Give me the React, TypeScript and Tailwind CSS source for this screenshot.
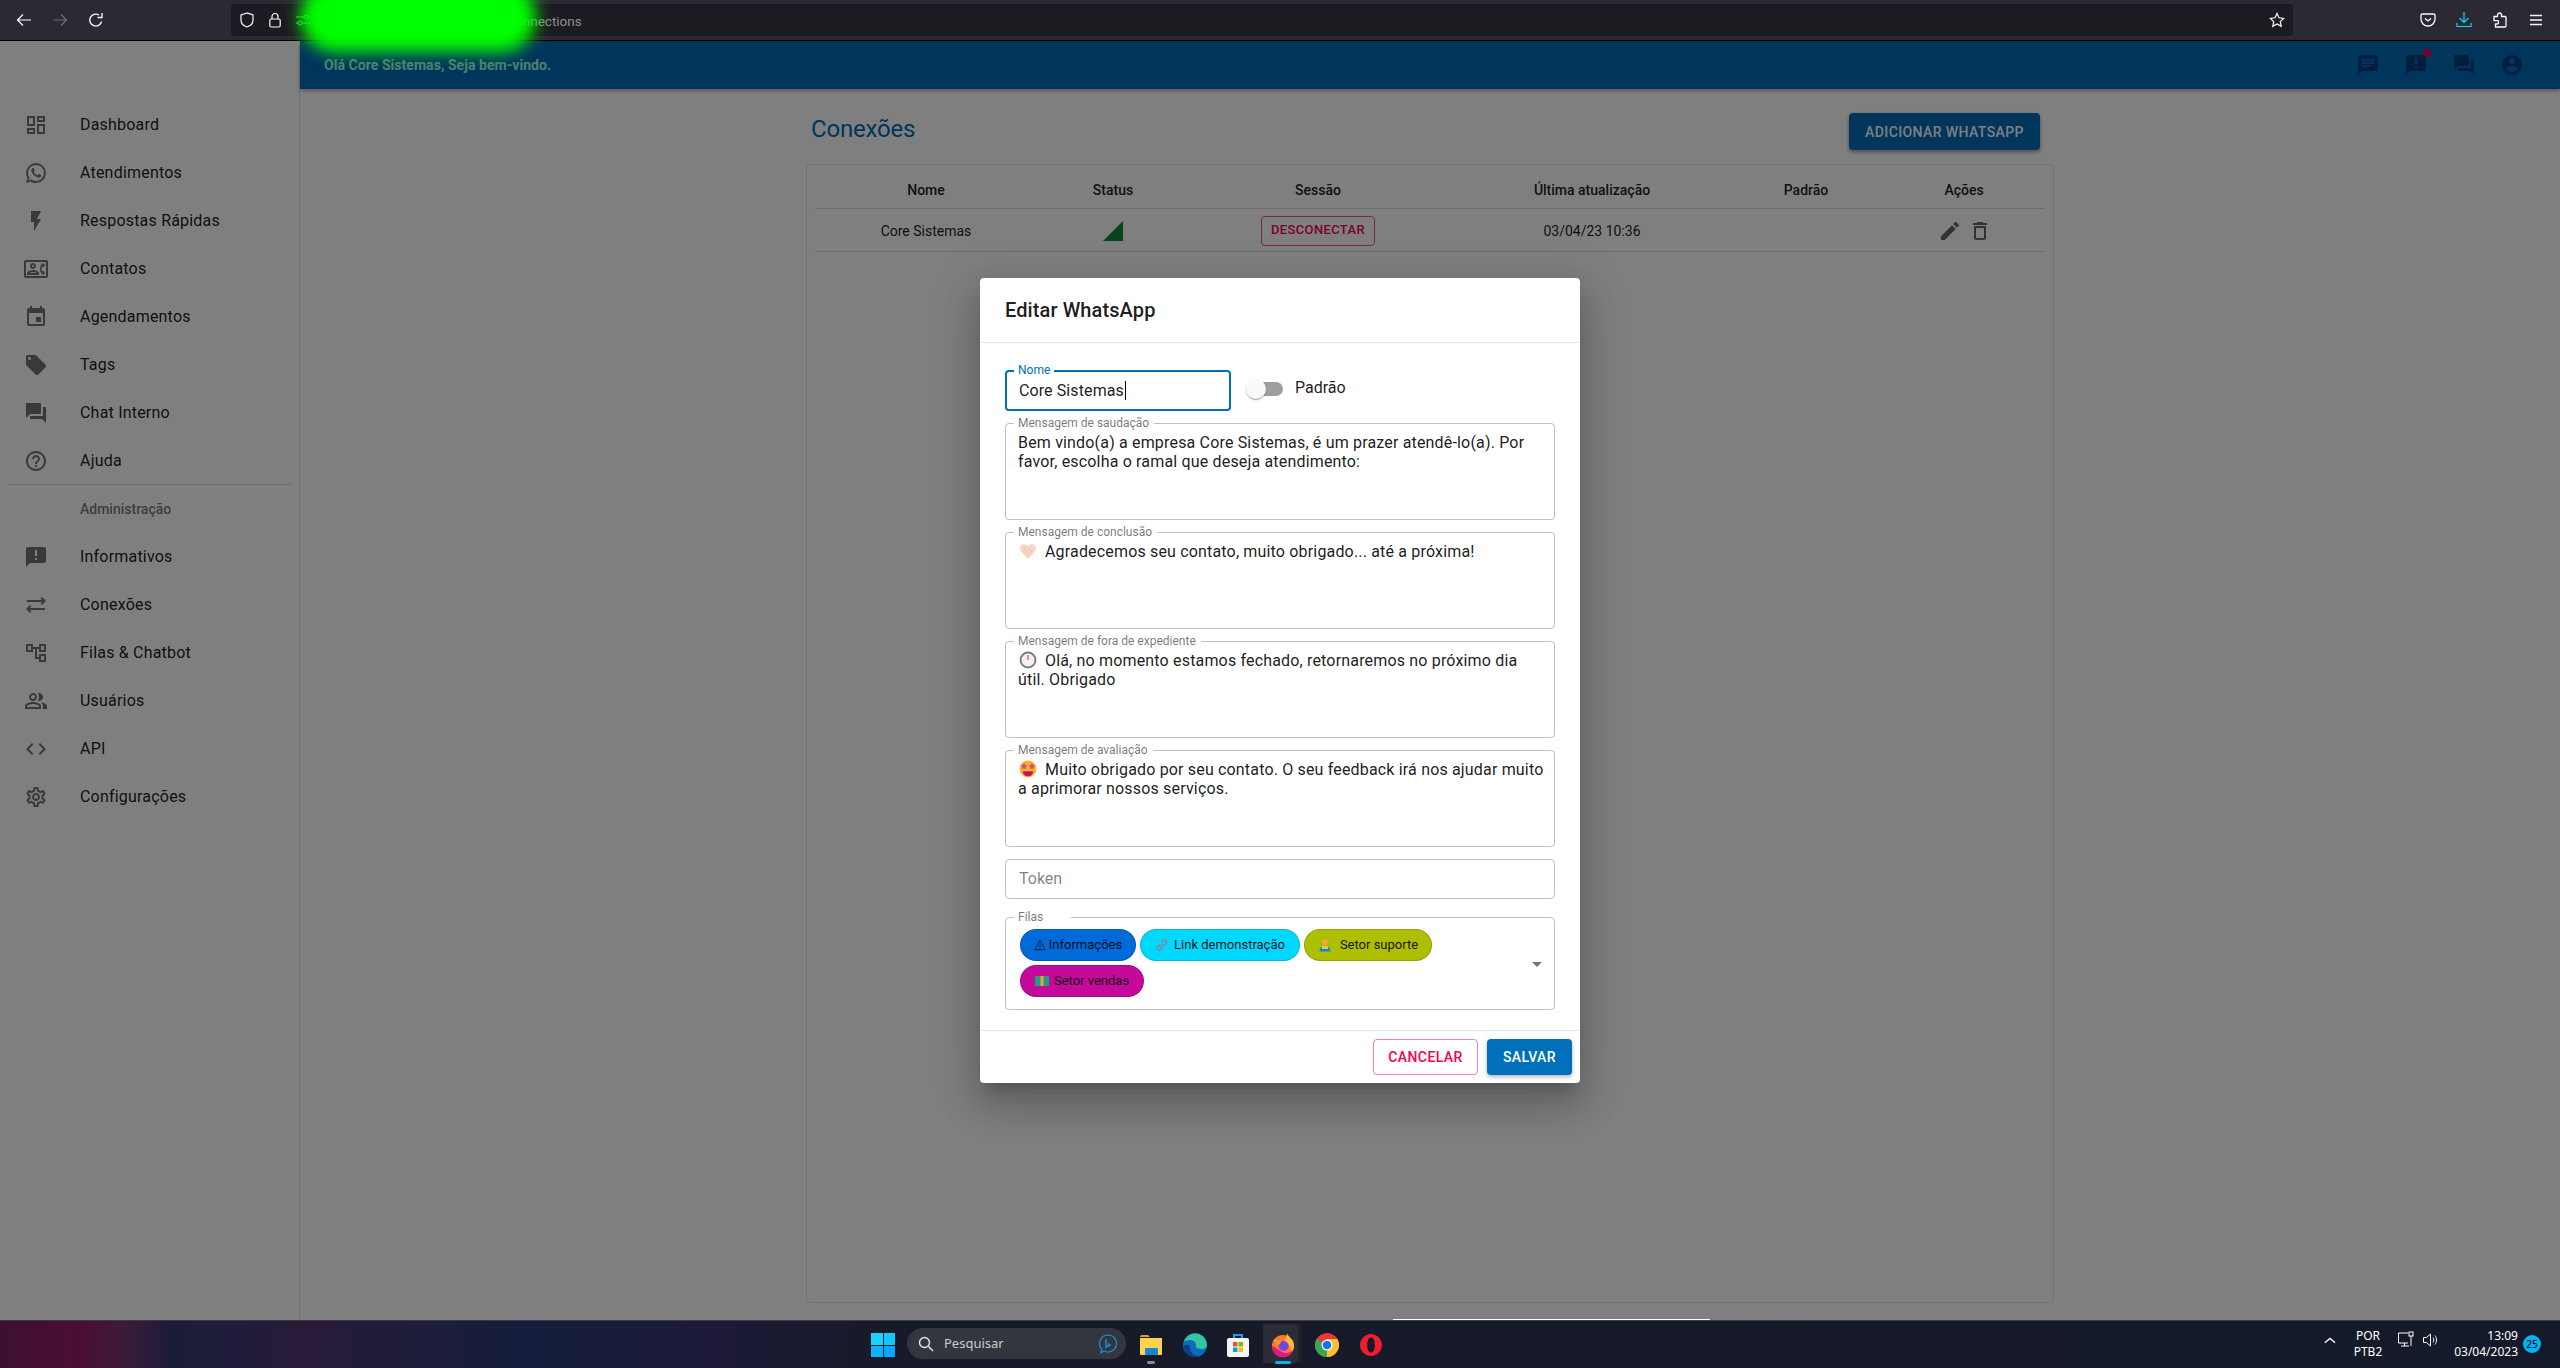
import React from "react";

const ICONS = {
  dashboard: "M19 5v2h-4V5h4M9 5v6H5V5h4m10 8v6h-4v-6h4M9 17v2H5v-2h4M21 3h-8v6h8V3zM11 3H3v10h8V3zm10 8h-8v10h8V11zm-10 4H3v6h8v-6z",
  whatsapp: "M16.75 13.96c.25.13.41.2.46.3.06.11.04.61-.21 1.18-.2.56-1.24 1.1-1.7 1.12-.46.02-.47.36-2.96-.73-2.49-1.09-3.99-3.75-4.11-3.92-.12-.17-.96-1.38-.92-2.61.05-1.22.69-1.8.95-2.04.24-.26.51-.29.68-.26h.47c.15 0 .36-.06.55.45l.69 1.87c.06.13.1.28.01.44l-.27.41-.39.42c-.12.12-.26.25-.12.5.12.26.62 1.09 1.32 1.78.91.88 1.71 1.17 1.95 1.3.24.14.39.12.54-.04l.81-.94c.19-.25.35-.19.58-.11l1.67.88M12 2a10 10 0 0 1 10 10 10 10 0 0 1-10 10c-1.97 0-3.8-.57-5.35-1.55L2 22l1.55-4.65A9.969 9.969 0 0 1 2 12 10 10 0 0 1 12 2m0 2a8 8 0 0 0-8 8c0 1.72.54 3.31 1.46 4.61L4.5 19.5l2.89-.96A7.95 7.95 0 0 0 12 20a8 8 0 0 0 8-8 8 8 0 0 0-8-8z",
  flash: "M7 2v11h3v9l7-12h-4l4-8z",
  contact: "M22 3H2C.9 3 0 3.9 0 5v14c0 1.1.9 2 2 2h20c1.1 0 1.99-.9 1.99-2L24 5c0-1.1-.9-2-2-2zm0 16H2V5h20v14zm-2.99-1.01L21 16l-1.51-2h-1.64c-.22-.63-.35-1.3-.35-2s.13-1.37.35-2h1.64L21 8l-1.99-1.99c-1.31.98-2.28 2.37-2.73 3.99-.18.64-.28 1.31-.28 2s.1 1.36.28 2c.45 1.61 1.42 3.01 2.73 3.99zM9 12c1.65 0 3-1.35 3-3s-1.35-3-3-3-3 1.35-3 3 1.35 3 3 3zm0-4c.55 0 1 .45 1 1s-.45 1-1 1-1-.45-1-1 .45-1 1-1zm6 8.59c0-2.5-3.97-3.58-6-3.58s-6 1.08-6 3.58V18h12v-1.41zM5.48 16c.74-.5 2.22-1 3.52-1s2.77.49 3.52 1H5.48z",
  event: "M17 12h-5v5h5v-5zM16 1v2H8V1H6v2H5c-1.11 0-1.99.9-1.99 2L3 19c0 1.1.89 2 2 2h14c1.1 0 2-.9 2-2V5c0-1.1-.9-2-2-2h-1V1h-2zm3 18H5V8h14v11z",
  tag: "M21.41 11.58l-9-9C12.05 2.22 11.55 2 11 2H4c-1.1 0-2 .9-2 2v7c0 .55.22 1.05.59 1.42l9 9c.36.36.86.58 1.41.58.55 0 1.05-.22 1.41-.59l7-7c.37-.36.59-.86.59-1.41 0-.55-.23-1.06-.59-1.42zM5.5 7C4.67 7 4 6.33 4 5.5S4.67 4 5.5 4 7 4.67 7 5.5 6.33 7 5.5 7z",
  forum: "M21 6h-2v9H6v2c0 .55.45 1 1 1h11l4 4V7c0-.55-.45-1-1-1zm-4 6V3c0-.55-.45-1-1-1H3c-.55 0-1 .45-1 1v14l4-4h10c.55 0 1-.45 1-1z",
  help: "M11 18h2v-2h-2v2zm1-16C6.48 2 2 6.48 2 12s4.48 10 10 10 10-4.48 10-10S17.52 2 12 2zm0 18c-4.41 0-8-3.59-8-8s3.59-8 8-8 8 3.59 8 8-3.59 8-8 8zm0-14c-2.21 0-4 1.79-4 4h2c0-1.1.9-2 2-2s2 .9 2 2c0 2-3 1.75-3 5h2c0-2.25 3-2.5 3-5 0-2.21-1.79-4-4-4z",
  announcement: "M20 2H4c-1.1 0-1.99.9-1.99 2L2 22l4-4h14c1.1 0 2-.9 2-2V4c0-1.1-.9-2-2-2zm-7 9h-2V5h2v6zm0 4h-2v-2h2v2z",
  sync: "M7.41 13.41L6 12l-4 4 4 4 1.41-1.41L5.83 17H21v-2H5.83zm9.18-2.82L18 12l4-4-4-4-1.41 1.41L18.17 7H3v2h15.17z",
  tree: "M22 11V3h-7v3H9V3H2v8h7V8h2v10h4v3h7v-8h-7v3h-2V8h2v3h7zM7 9H4V5h3v4zm10 6h3v4h-3v-4zm0-10h3v4h-3V5z",
  people: "M16.67 13.13C18.04 14.06 19 15.32 19 17v3h4v-3c0-2.18-3.57-3.47-6.33-3.87zM15 12c2.21 0 4-1.79 4-4s-1.79-4-4-4c-.47 0-.91.1-1.33.24C14.5 5.27 15 6.58 15 8s-.5 2.73-1.33 3.76c.42.14.86.24 1.33.24zM9 12c2.21 0 4-1.79 4-4s-1.79-4-4-4-4 1.79-4 4 1.79 4 4 4zm0-6c1.1 0 2 .9 2 2s-.9 2-2 2-2-.9-2-2 .9-2 2-2zM9 13c-2.67 0-8 1.34-8 4v3h16v-3c0-2.66-5.33-4-8-4zm6 5H3v-.99C3.2 16.29 6.3 15 9 15s5.8 1.29 6 2v1z",
  code: "M9.4 16.6L4.8 12l4.6-4.6L8 6l-6 6 6 6 1.4-1.4zm5.2 0l4.6-4.6-4.6-4.6L16 6l6 6-6 6-1.4-1.4z",
  settings: "M19.43 12.98c.04-.32.07-.64.07-.98 0-.34-.03-.66-.07-.98l2.11-1.65c.19-.15.24-.42.12-.64l-2-3.46c-.09-.16-.26-.25-.44-.25-.06 0-.12.01-.17.03l-2.49 1c-.52-.4-1.08-.73-1.69-.98l-.38-2.65C14.46 2.18 14.25 2 14 2h-4c-.25 0-.46.18-.49.42l-.38 2.65c-.61.25-1.17.59-1.69.98l-2.49-1c-.06-.02-.12-.03-.18-.03-.17 0-.34.09-.43.25l-2 3.46c-.13.22-.07.49.12.64l2.11 1.65c-.04.32-.07.65-.07.98 0 .33.03.66.07.98l-2.11 1.65c-.19.15-.24.42-.12.64l2 3.46c.09.16.26.25.44.25.06 0 .12-.01.17-.03l2.49-1c.52.4 1.08.73 1.69.98l.38 2.65c.03.24.24.42.49.42h4c.25 0 .46-.18.49-.42l.38-2.65c.61-.25 1.17-.59 1.69-.98l2.49 1c.06.02.12.03.18.03.17 0 .34-.09.43-.25l2-3.46c.12-.22.07-.49-.12-.64l-2.11-1.65zm-1.98-1.71c.04.31.05.52.05.73 0 .21-.02.43-.05.73l-.14 1.13.89.7 1.08.84-.7 1.21-1.27-.51-1.04-.42-.9.68c-.43.32-.84.56-1.25.73l-1.06.43-.16 1.13-.2 1.35h-1.4l-.19-1.35-.16-1.13-1.06-.43c-.43-.18-.83-.41-1.23-.71l-.91-.7-1.06.43-1.27.51-.7-1.21 1.08-.84.89-.7-.14-1.13c-.03-.31-.05-.54-.05-.74s.02-.43.05-.73l.14-1.13-.89-.7-1.08-.84.7-1.21 1.27.51 1.04.42.9-.68c.43-.32.84-.56 1.25-.73l1.06-.43.16-1.13.2-1.35h1.39l.19 1.35.16 1.13 1.06.43c.43.18.83.41 1.23.71l.91.7 1.06-.43 1.27-.51.7 1.21-1.07.85-.89.7.14 1.13zM12 8c-2.21 0-4 1.79-4 4s1.79 4 4 4 4-1.79 4-4-1.79-4-4-4zm0 6c-1.1 0-2-.9-2-2s.9-2 2-2 2 .9 2 2-.9 2-2 2z",
  chat: "M20 2H4c-1.1 0-1.99.9-1.99 2L2 22l4-4h14c1.1 0 2-.9 2-2V4c0-1.1-.9-2-2-2zM6 9h12v2H6V9zm8 5H6v-2h8v2zm4-6H6V6h12v2z",
  account: "M12 2C6.48 2 2 6.48 2 12s4.48 10 10 10 10-4.48 10-10S17.52 2 12 2zm0 3c1.66 0 3 1.34 3 3s-1.34 3-3 3-3-1.34-3-3 1.34-3 3-3zm0 14.2c-2.5 0-4.71-1.28-6-3.22.03-1.99 4-3.08 6-3.08 1.99 0 5.97 1.09 6 3.08-1.29 1.94-3.5 3.22-6 3.22z",
  edit: "M3 17.25V21h3.75L17.81 9.94l-3.75-3.75L3 17.25zM20.71 7.04c.39-.39.39-1.02 0-1.41l-2.34-2.34c-.39-.39-1.02-.39-1.41 0l-1.83 1.83 3.75 3.75 1.83-1.83z",
  trash: "M6 19c0 1.1.9 2 2 2h8c1.1 0 2-.9 2-2V7H6v12zM8 9h8v10H8V9zm7.5-5l-1-1h-5l-1 1H5v2h14V4z",
  signal: "M2 22h20V2z",
  dropdown: "M7 10l5 5 5-5z",
};

function Mi({ name, className }: { name: keyof typeof ICONS; className?: string }) {
  return (
    <svg viewBox="0 0 24 24" className={className} fill="currentColor">
      <path d={ICONS[name]} />
    </svg>
  );
}

const menuTop: [keyof typeof ICONS, string][] = [
  ["dashboard", "Dashboard"],
  ["whatsapp", "Atendimentos"],
  ["flash", "Respostas Rápidas"],
  ["contact", "Contatos"],
  ["event", "Agendamentos"],
  ["tag", "Tags"],
  ["forum", "Chat Interno"],
  ["help", "Ajuda"],
];

const menuAdmin: [keyof typeof ICONS, string][] = [
  ["announcement", "Informativos"],
  ["sync", "Conexões"],
  ["tree", "Filas & Chatbot"],
  ["people", "Usuários"],
  ["code", "API"],
  ["settings", "Configurações"],
];

function MenuItem({ icon, label }: { icon: keyof typeof ICONS; label: string }) {
  return (
    <div className="flex h-12 items-center pl-6">
      <div className="w-14">
        <Mi name={icon} className="h-6 w-6 text-black/55" />
      </div>
      <span className="text-base tracking-[0.2px] text-black/90">{label}</span>
    </div>
  );
}

function FirefoxBar() {
  return (
    <div className="flex h-10 items-center bg-[#2b2a33] text-[#fbfbfe]">
      <div className="flex w-[231px] items-center">
        <svg viewBox="0 0 16 16" className="ml-4 h-4 w-4" fill="none" stroke="currentColor" strokeWidth="1.2">
          <path d="M15 8H1.5M7 2.5 1.5 8 7 13.5" />
        </svg>
        <svg viewBox="0 0 16 16" className="ml-5 h-4 w-4 text-[#6f6e76]" fill="none" stroke="currentColor" strokeWidth="1.2">
          <path d="M1 8h13.5M9 2.5 14.5 8 9 13.5" />
        </svg>
        <svg viewBox="0 0 16 16" className="ml-5 h-4 w-4" fill="none" stroke="currentColor" strokeWidth="1.3">
          <path d="M13.6 9.5A6 6 0 1 1 11 3" />
          <path d="M14 1v4.5H9.5" />
        </svg>
      </div>
      <div className="flex h-8 w-[2062px] items-center rounded bg-[#1c1b22]">
        <svg viewBox="0 0 16 16" className="ml-2 h-4 w-4" fill="none" stroke="currentColor" strokeWidth="1.2">
          <path d="M8 1 2 3v5c0 3.5 2.8 6 6 7 3.2-1 6-3.5 6-7V3z" />
        </svg>
        <svg viewBox="0 0 16 16" className="ml-3 h-4 w-4" fill="none" stroke="currentColor" strokeWidth="1.2">
          <rect x="2.8" y="7" width="10.4" height="8" rx="1.5" />
          <path d="M5 7V4.5a3 3 0 0 1 6 0V7" />
        </svg>
        <svg viewBox="0 0 16 16" className="ml-3 h-4 w-4 text-[#20e040]" fill="none" stroke="currentColor" strokeWidth="1">
          <path d="M1 5h8M13 5h2M1 11h2M7 11h8" />
          <circle cx="11" cy="5" r="2" />
          <circle cx="5" cy="11" r="2" />
        </svg>
        <span className="ml-[197px] mt-[2px] text-[13.5px] text-[#8f8f94]">connections</span>
        <svg viewBox="0 0 16 16" className="ml-auto mr-2 h-4 w-4" fill="none" stroke="currentColor" strokeWidth="1.2">
          <path d="m8 1.5 2 4.3 4.7.6-3.4 3.2.9 4.7L8 12l-4.2 2.3.9-4.7L1.3 6.4 6 5.8z" />
        </svg>
      </div>
      <div className="ml-auto flex w-[267px] items-center justify-end gap-5 pr-[16px]">
        <svg viewBox="0 0 16 16" className="h-4 w-4" fill="none" stroke="currentColor" strokeWidth="1.3">
          <path d="M2.5 2h11A1.5 1.5 0 0 1 15 3.5V7A7 7 0 0 1 1 7V3.5A1.5 1.5 0 0 1 2.5 2z" />
          <path d="m5 6.5 3 2.5 3-2.5" />
        </svg>
        <svg viewBox="0 0 16 16" className="h-4 w-4 text-[#00ddff]" fill="none" stroke="currentColor" strokeWidth="1.2">
          <path d="M8 0v10M3.5 6 8 10.5 12.5 6M1 11v3.5h14V11" />
        </svg>
        <svg viewBox="0 0 16 16" className="h-4 w-4" fill="none" stroke="currentColor" strokeWidth="1.3">
          <path d="M2 4.5h3.5V3a2 2 0 0 1 4 0v1.5H13a1 1 0 0 1 1 1V14a1 1 0 0 1-1 1H3.5v-3H5a1.7 1.7 0 0 0 0-3.4H2z" />
        </svg>
        <svg viewBox="0 0 16 16" className="h-4 w-4" fill="none" stroke="currentColor" strokeWidth="1.3">
          <path d="M2 3.5h12M2 8h12M2 12.5h12" />
        </svg>
      </div>
    </div>
  );
}

function TopHeader() {
  return (
    <div className="flex h-12 items-center bg-[#006ab8] pl-6 pr-9 shadow-[0_2px_4px_rgba(0,0,0,0.3)]">
      <span className="text-sm font-bold tracking-[0.05px] text-[#a0ffe4]">Olá Core Sistemas, Seja bem-vindo.</span>
      <div className="relative ml-auto flex gap-6 text-[#003e7c]">
        <Mi name="chat" className="h-6 w-6" />
        <div className="relative">
          <Mi name="announcement" className="h-6 w-6" />
          <span className="absolute -right-[3px] -top-1 h-2 w-2 rounded-full bg-[#f50057]" />
        </div>
        <Mi name="forum" className="h-6 w-6" />
        <Mi name="account" className="h-6 w-6" />
      </div>
    </div>
  );
}

function ConnectionsPage() {
  return (
    <div className="mx-auto flex min-h-0 w-[1280px] flex-1 flex-col px-4 pb-[17px] pt-6">
      <div className="flex h-[37px] items-center justify-between pl-[5px] pr-[14px]">
        <h2 className="-mt-[6px] text-[24px] leading-none tracking-[-0.2px] text-[#006ab8]">Conexões</h2>
        <button className="flex h-[37px] w-[191px] items-center justify-center rounded bg-[#006ab8] text-sm font-medium tracking-[0.4px] text-white shadow-[0_2px_4px_rgba(0,0,0,0.4)]">
          ADICIONAR WHATSAPP
        </button>
      </div>
      <div className="mt-[14px] flex-1 rounded border border-black/10 p-2">
        <div className="grid h-9 grid-cols-[222px_142px_278px_270px_158px_160px] items-center border-b border-black/15 pb-[2px] text-center text-sm font-medium text-black/90">
          <span>Nome</span>
          <span className="pl-[10px]">Status</span>
          <span>Sessão</span>
          <span>Última atualização</span>
          <span>Padrão</span>
          <span className="pr-[2px]">Ações</span>
        </div>
        <div className="grid h-[43px] grid-cols-[222px_142px_278px_270px_158px_160px] items-center border-b border-black/15 pt-[1px] text-center text-sm text-black/90">
          <span>Core Sistemas</span>
          <span className="flex justify-center pl-[10px]">
            <Mi name="signal" className="h-6 w-6 text-[#0f8a3a]" />
          </span>
          <span className="flex justify-center">
            <span className="flex h-[30px] w-[114px] items-center justify-center rounded border border-[#f50057]/70 text-[13px] font-medium tracking-[0.37px] text-[#f50057]">
              DESCONECTAR
            </span>
          </span>
          <span>03/04/23 10:36</span>
          <span />
          <span className="flex justify-center gap-1.5 pr-px text-black/60">
            <Mi name="edit" className="h-6 w-6" />
            <Mi name="trash" className="h-6 w-6" />
          </span>
        </div>
      </div>
    </div>
  );
}

function Emoji({ kind }: { kind: "heart" | "clock" | "star" | "warn" | "link" | "person" | "money" }) {
  if (kind === "heart")
    return (
      <svg viewBox="0 0 16 16" className="ml-px mr-[8px] inline-block h-[18px] w-[18px] align-[-3px]">
        <path d="M8 15 1.5 8C-.5 5 2 1.500 5 2c1.400.2 2.400 1 3 2 .6-1 1.600-1.800 3-2 3-.5 5.500 3 3.500 6z" fill="#f8d5c4" />
        <path d="M4 5 10 11M7 4l5 5M3 8l4 4" stroke="#f2b59c" strokeWidth="0.7" />
      </svg>
    );
  if (kind === "clock")
    return (
      <svg viewBox="0 0 16 16" className="ml-px mr-[8px] inline-block h-[18px] w-[18px] align-[-3px]">
        <circle cx="8" cy="8" r="7.500" fill="#7d7d7d" />
        <circle cx="8" cy="8" r="5.800" fill="#f1f1f1" />
        <path d="M8 8V3.500" stroke="#d0486a" strokeWidth="1" />
      </svg>
    );
  if (kind === "star")
    return (
      <svg viewBox="0 0 16 16" className="ml-px mr-[8px] inline-block h-[18px] w-[18px] align-[-3px]">
        <circle cx="8" cy="8" r="7.500" fill="#f7b32b" />
        <path d="m4.500 2.500 1 2 2 .3-1.500 1.500.4 2-1.900-1-1.900 1 .4-2L1.500 4.800l2-.3zM11.500 2.500l1 2 2 .3-1.500 1.500.4 2-1.900-1-1.900 1 .4-2-1.500-1.500 2-.3z" fill="#ec3f8f" />
        <path d="M3.500 10h9c0 3-2 4.500-4.500 4.500S3.500 13 3.500 10z" fill="#c2185b" />
      </svg>
    );
  if (kind === "warn")
    return (
      <svg viewBox="0 0 14 14" className="mr-[3px] h-3 w-3 shrink-0" fill="none" stroke="#111" strokeWidth="1">
        <path d="M7 1.500 13 12.500H1z" />
        <path d="M7 5.500v4M7 10.500v1" />
      </svg>
    );
  if (kind === "link")
    return (
      <svg viewBox="0 0 14 14" className="mr-[5px] h-[14px] w-[14px] shrink-0" fill="none" stroke="#6f94a8" strokeWidth="2">
        <path d="M6 8.500 8.500 6M5 6.500 2.800 8.700a2 2 0 0 0 2.800 2.800L7.500 9.500M9 7.500l2.200-2.200a2 2 0 0 0-2.800-2.800L6.500 4.500" />
      </svg>
    );
  if (kind === "person")
    return (
      <svg viewBox="0 0 14 14" className="mr-[8px] h-[14px] w-[14px] shrink-0">
        <circle cx="7" cy="4" r="3" fill="#f0a93a" />
        <path d="M1.500 13.500c0-3.500 2-5.500 5.500-5.500s5.500 2 5.500 5.500z" fill="#1e88c9" />
        <path d="M4 8h6v3H4z" fill="#e8c16a" />
      </svg>
    );
  return (
    <svg viewBox="0 0 14 14" className="mr-[5px] h-[14px] w-[14px] shrink-0">
      <rect x="0" y="2" width="14" height="10" rx="1" fill="#1f9d8a" />
      <rect x="5.500" y="2" width="3" height="10" fill="#e8a33a" />
    </svg>
  );
}

function Outlined({ label, labelClass, className, children }: {
  label: string;
  labelClass?: string;
  className?: string;
  children: React.ReactNode;
}) {
  return (
    <div className={`relative rounded border border-black/25 ${className ?? ""}`}>
      <span className={`absolute -top-2 left-2 bg-white pl-[4px] pr-[5px] text-xs leading-[14px] tracking-normal text-black/55 ${labelClass ?? ""}`}>
        {label}
      </span>
      {children}
    </div>
  );
}

function MessageField({ label, children }: { label: string; children: React.ReactNode }) {
  return (
    <Outlined label={label} className="h-[97px] pl-3 pr-2 pt-[9px] text-base leading-[19px] tracking-[0.17px] text-black/90">
      {children}
    </Outlined>
  );
}

function Chip({ bg, width, children }: { bg: string; width: string; children: React.ReactNode }) {
  return (
    <div className={`flex h-8 items-center justify-center rounded-2xl border border-black/15 text-[13px] text-black/90 ${bg} ${width}`}>
      {children}
    </div>
  );
}

function EditDialog() {
  return (
    <div className="w-[600px] rounded bg-white shadow-[0_11px_15px_-7px_rgba(0,0,0,0.2),0_24px_38px_3px_rgba(0,0,0,0.14),0_9px_46px_8px_rgba(0,0,0,0.12)]">
      <div className="flex h-[65px] items-center border-b border-black/10 px-[25px]">
        <h2 className="text-xl font-medium tracking-[0.1px] text-black/90">Editar WhatsApp</h2>
      </div>
      <div className="flex flex-col gap-3 px-[25px] pb-5 pt-[27px]">
        <div className="flex items-start">
          <div className="relative h-[41px] w-[226px] rounded border-2 border-[#0070bb]">
            <span className="absolute -top-[9px] left-[7px] bg-white px-[4px] text-xs leading-[14px] text-[#0070bb]">Nome</span>
            <div className="flex h-full items-center pl-3 text-base tracking-[0.1px] text-black/90">
              Core Sistemas
              <span className="ml-px h-[19px] w-px bg-black" />
            </div>
          </div>
          <div className="relative ml-[25px] mt-3 h-[14px] w-[27px] rounded-full bg-[#9e9e9e]">
            <span className="absolute -left-[10px] -top-[3px] h-5 w-5 rounded-full bg-[#fafafa] shadow-[0_2px_1px_-1px_rgba(0,0,0,0.2),0_1px_1px_0_rgba(0,0,0,0.14),0_1px_3px_0_rgba(0,0,0,0.12)]" />
          </div>
          <span className="ml-3 mt-2 text-base leading-[19px] text-black/90">Padrão</span>
        </div>

        <MessageField label="Mensagem de saudação">
          Bem vindo(a) a empresa Core Sistemas, é um prazer atendê-lo(a). Por favor, escolha o ramal que deseja atendimento:
        </MessageField>
        <MessageField label="Mensagem de conclusão">
          <Emoji kind="heart" />
          Agradecemos seu contato, muito obrigado... até a próxima!
        </MessageField>
        <MessageField label="Mensagem de fora de expediente">
          <Emoji kind="clock" />
          Olá, no momento estamos fechado, retornaremos no próximo dia útil. Obrigado
        </MessageField>
        <MessageField label="Mensagem de avaliação">
          <Emoji kind="star" />
          Muito obrigado por seu contato. O seu feedback irá nos ajudar muito a aprimorar nossos serviços.
        </MessageField>

        <div className="flex h-10 items-center rounded border border-black/25 pl-[13px] text-base text-black/50">Token</div>

        <Outlined label="Filas" labelClass="pr-[28px]" className="mt-[6px] h-[93px]">
          <div className="flex w-[430px] flex-wrap gap-1 pl-[14px] pt-[11px]">
            <Chip bg="bg-[#006ad9]" width="w-[116px]"><Emoji kind="warn" />Informações</Chip>
            <Chip bg="bg-[#00d8ff]" width="w-[160px]"><Emoji kind="link" />Link demonstração</Chip>
            <Chip bg="bg-[#adbf00]" width="w-[128px]"><Emoji kind="person" />Setor suporte</Chip>
            <Chip bg="bg-[#c4099b]" width="w-[124px]"><Emoji kind="money" />Setor vendas</Chip>
          </div>
          <Mi name="dropdown" className="absolute right-[5px] top-[34px] h-6 w-6 text-black/55" />
        </Outlined>
      </div>
      <div className="flex h-[53px] items-center justify-end gap-[9px] border-t border-black/10 pr-2">
        <button className="h-9 w-[105px] rounded border border-[#f50057]/50 text-sm font-medium tracking-[0.4px] text-[#f50057]">CANCELAR</button>
        <button className="h-9 w-[85px] rounded bg-[#0070bb] text-sm font-medium tracking-[0.4px] text-white shadow-[0_2px_4px_rgba(0,0,0,0.3)]">SALVAR</button>
      </div>
    </div>
  );
}

function TaskIcons() {
  return (
    <>
      <svg viewBox="0 0 24 24" className="absolute left-[1139px] top-[12px] h-6 w-6">
        <path d="M1 4a2 2 0 0 1 2-2h6l2 2h-10z" fill="#e8a020" />
        <path d="M1 5h22v16a1 1 0 0 1-1 1H2a1 1 0 0 1-1-1z" fill="#fbd34e" />
        <rect x="6" y="15" width="13" height="7" rx="1" fill="#1a86d0" />
      </svg>
      <span className="absolute left-[1147px] top-[40px] h-[3px] w-2 rounded bg-[#8b8d93]" />
      <svg viewBox="0 0 24 24" className="absolute left-[1183px] top-[12px] h-6 w-6">
        <circle cx="12" cy="12" r="12" fill="#0c6cb8" />
        <path d="M1 9C3 2 10-1 16 1c5 2 8 7 8 11 0 3-3 4-6 4-3 0-6-1-5-4 0-3-3-5-6-5-3 0-5 1-6 2z" fill="#34c6a3" />
        <path d="M7 15c0 4 4 8 9 8l-5 1C6 24 1 20 0 14c2-3 7-3 7 1z" fill="#0a3f86" />
      </svg>
      <svg viewBox="0 0 24 24" className="absolute left-[1226px] top-[12px] h-6 w-6">
        <path d="M8 6V2h8v4" fill="none" stroke="#0ea5e9" strokeWidth="2" />
        <rect x="1" y="5" width="22" height="19" rx="2" fill="#f4f4f4" />
        <rect x="7" y="9" width="4.500" height="4.500" fill="#f25022" />
        <rect x="12.500" y="9" width="4.500" height="4.500" fill="#7fba00" />
        <rect x="7" y="14.500" width="4.500" height="4.500" fill="#00a4ef" />
        <rect x="12.500" y="14.500" width="4.500" height="4.500" fill="#ffb900" />
      </svg>
      <span className="absolute left-[1263px] top-[3px] h-[39px] w-[39px] rounded-r bg-[#1f222b]" />
      <span className="absolute left-[1263px] top-[3px] h-[39px] w-[35px] rounded bg-[#2a2d37]" />
      <svg viewBox="0 0 24 24" className="absolute left-[1271px] top-[12px] h-6 w-6">
        <circle cx="12" cy="13" r="11" fill="#ff7a2b" />
        <path d="M16 0c1 4 7 6 7 13 0 2-1 4-2 6-1-4-3-9-8-11 2-2 3-5 3-8z" fill="#ffbd2e" />
        <path d="M1 13C1 20 6 24 12 24c5 0 9-3 10-7-3 3-7 4-11 2C7 17 4 14 1 13z" fill="#e31587" />
        <circle cx="12.500" cy="13" r="5" fill="#7542e5" />
        <path d="M2 7c3-1 6 0 8 2l-2 3C6 10 4 9 2 7z" fill="#ff9a2e" />
      </svg>
      <span className="absolute left-[1275px] top-[40px] h-[3px] w-4 rounded bg-[#00b4f0]" />
      <svg viewBox="0 0 24 24" className="absolute left-[1315px] top-[12px] h-6 w-6">
        <circle cx="12" cy="12" r="12" fill="#e53935" />
        <path d="M12 12 1.600 6A12 12 0 0 0 12 24z" fill="#34a853" />
        <path d="M12 12 12 24A12 12 0 0 0 22.400 6H12z" fill="#fbc02d" />
        <circle cx="12" cy="12" r="5.500" fill="#fff" />
        <circle cx="12" cy="12" r="4.300" fill="#1a73e8" />
      </svg>
      <svg viewBox="0 0 24 24" className="absolute left-[1359px] top-[12px] h-6 w-6">
        <path fillRule="evenodd" d="M12 1c6 0 11 5 11 11s-5 11-11 11S1 18 1 12 6 1 12 1zm0 3.500c-2.500 0-3.800 3.400-3.800 7.500s1.300 7.500 3.800 7.500 3.800-3.400 3.800-7.500S14.500 4.500 12 4.500z" fill="#f01c2e" />
      </svg>
    </>
  );
}

function Taskbar() {
  return (
    <div className="relative h-12 border-t border-[#3a3b46] bg-[linear-gradient(90deg,#3d1030_0px,#4a0d33_80px,#3e1a3a_120px,#1c1c38_170px,#1e1c3a_240px,#281b38_300px,#141e3c_520px,#1c1a38_720px,#171a28_900px,#151a2a_100%)] font-[family-name:'Noto_Sans',sans-serif] text-white">
      <div className="absolute left-[871px] top-[12px] grid h-6 w-6 grid-cols-2 gap-px">
        <span className="bg-[#19d3ff]" />
        <span className="bg-[#10c8ff]" />
        <span className="bg-[#0ab4ff]" />
        <span className="bg-[#05a8ff]" />
      </div>
      <div className="absolute left-[907px] top-[7px] flex h-[31px] w-[219px] items-center rounded-full bg-[#33363f] pl-[11px]">
        <svg viewBox="0 0 16 16" className="h-4 w-4" fill="none" stroke="#e8e8e8" strokeWidth="1.4">
          <circle cx="6.500" cy="6.500" r="5" />
          <path d="m10.500 10.500 4.500 4.500" />
        </svg>
        <span className="ml-[10px] text-[13px] text-[#c9cace]">Pesquisar</span>
        <svg viewBox="0 0 20 20" className="ml-auto mr-2 h-5 w-5" fill="none" stroke="#1a8fd8" strokeWidth="1.2">
          <path d="M10 1a8.500 8.500 0 1 1-4 16l-3 2 .6-4A8.500 8.500 0 0 1 10 1z" />
          <path d="M8 5v8l4-2-2-1.500" strokeWidth="1.500" />
        </svg>
      </div>
      <TaskIcons />
      <svg viewBox="0 0 14 10" className="absolute left-[2324px] top-[15px] h-[10px] w-3" fill="none" stroke="#fff" strokeWidth="1.500">
        <path d="m1 7 6-5 6 5" />
      </svg>
      <div className="absolute left-[2348px] top-[7px] w-10 text-center text-xs leading-4">
        <div>POR</div>
        <div>PTB2</div>
      </div>
      <svg viewBox="0 0 18 18" className="absolute left-[2397px] top-[10px] h-[18px] w-[18px]" fill="none" stroke="#fff" strokeWidth="1">
        <path d="M11 2H1.500v10H11M4 15h8M7.500 12v3" />
        <rect x="12" y="1" width="4" height="4" />
        <path d="M14 5v10" />
      </svg>
      <svg viewBox="0 0 18 18" className="absolute left-[2422px] top-[10px] h-[18px] w-[18px]" fill="none" stroke="#fff" strokeWidth="1">
        <path d="M1.500 6.500h3l4-3.500v12l-4-3.500h-3z" />
        <path d="M11 6.500c1 1.500 1 3.500 0 5M13 4.500c2 2.500 2 6.500 0 9" />
      </svg>
      <div className="absolute right-[42px] top-[7px] text-right text-xs leading-4">
        <div>13:09</div>
        <div>03/04/2023</div>
      </div>
      <div className="absolute left-[2523px] top-[14px] flex h-[18px] w-[18px] items-center justify-center rounded-full bg-[#00b4f5] text-[10px] font-medium text-[#0a1420]">
        25
      </div>
    </div>
  );
}

export default function App() {
  return (
    <div className="relative flex h-[1368px] w-[2560px] flex-col overflow-hidden bg-white font-[family-name:Roboto,sans-serif]">
      <div className="border-b border-black">
        <FirefoxBar />
      </div>
      <div className="relative flex min-h-0 flex-1">
        <aside className="w-[300px] shrink-0 border-r border-black/10 pt-[60px]">
          {menuTop.map(([icon, label]) => (
            <MenuItem key={label} icon={icon} label={label} />
          ))}
          <div className="mx-2 -mt-px border-t border-black/15" />
          <div className="flex h-12 items-center pl-20 text-sm font-medium text-black/55">Administração</div>
          {menuAdmin.map(([icon, label]) => (
            <MenuItem key={label} icon={icon} label={label} />
          ))}
        </aside>
        <main className="flex min-w-0 flex-1 flex-col">
          <TopHeader />
          <ConnectionsPage />
        </main>
        <div className="absolute inset-0 flex items-center justify-center bg-black/50">
          <EditDialog />
        </div>
        <span className="absolute bottom-0 left-[1393px] h-px w-[317px] bg-white" />
      </div>
      <Taskbar />
      <div className="absolute -top-[18px] left-[300px] h-[70px] w-[236px] rounded-full bg-[#00ff00] blur-[8px]" />
    </div>
  );
}
